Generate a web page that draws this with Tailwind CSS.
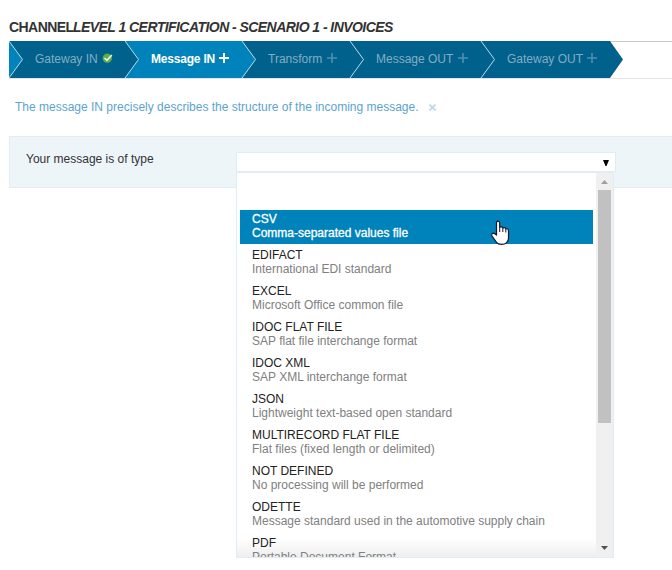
<!DOCTYPE html>
<html lang="en">
<head>
<meta charset="utf-8">
<title>Channel</title>
<script src="https://cdn.jsdelivr.net/npm/@tailwindcss/browser@4"></script>
</head>
<body class="w-[672px] h-[570px] overflow-hidden bg-white text-[12px] leading-[14px] text-[#333] font-['Liberation_Sans',Arial,sans-serif]">
<div class="flex flex-col pl-[9px]">
  <h1 class="mt-[19px] h-[22px] text-[14px] leading-[16px] font-bold whitespace-nowrap"><span class="inline-block w-[64px] tracking-[-0.55px]">CHANNEL</span><i class="tracking-[-0.55px]">LEVEL 1 CERTIFICATION - SCENARIO 1 - INVOICES</i></h1>
  <nav class="relative h-[38px] border-t border-b border-t-[#ccc] border-b-[#e5e5e5]">
    <svg class="absolute -top-px left-0" width="614" height="37" viewBox="0 0 614 37">
      <path d="M0 0H601L614 18.500L601 37H0Z" fill="#00618c"/>
      <path d="M0 0L13.500 18.500L0 37ZM116 0H233L246.500 18.500L233 37H116L129.500 18.500Z" fill="#0082bb"/>
      <path d="M0 0L13.500 18.500L0 37M116 0L129.500 18.500L116 37M233 0L246.500 18.500L233 37M341 0L354.500 18.500L341 37M472 0L485.500 18.500L472 37" fill="none" stroke="#b9dcec"/>
    </svg>
    <div class="relative flex h-[36px] items-center pl-[26px] pb-[2px] text-[#84adc1] whitespace-nowrap">
      <div class="flex w-[116px] items-center"><span class="w-[67px]">Gateway IN</span>
        <svg class="-mt-[2px]" width="12" height="12" viewBox="0 0 12 12"><circle cx="5.300" cy="6.300" r="4.700" fill="#5cae4a"/><path d="M2.500 6L5 8.300L9.800 3" fill="none" stroke="#eef7e8" stroke-width="1.600"/></svg></div>
      <div class="flex w-[117px] items-center font-bold text-white"><span class="w-[68px] tracking-[-0.2px]">Message IN</span>
        <svg class="-mt-[2px]" width="10" height="10" viewBox="0 0 10 10"><path d="M5 0V10M0 5H10" stroke="#fff" stroke-width="2"/></svg></div>
      <div class="flex w-[108px] items-center"><span class="w-[59px]">Transform</span>
        <svg class="-mt-[2px]" width="10" height="10" viewBox="0 0 10 10"><path d="M5 0V10M0 5H10" stroke="#4d90ae" stroke-width="1.600"/></svg></div>
      <div class="flex w-[131px] items-center"><span class="w-[82px]">Message OUT</span>
        <svg class="-mt-[2px]" width="10" height="10" viewBox="0 0 10 10"><path d="M5 0V10M0 5H10" stroke="#4d90ae" stroke-width="1.600"/></svg></div>
      <div class="flex items-center"><span class="w-[80px]">Gateway OUT</span>
        <svg class="-mt-[2px]" width="10" height="10" viewBox="0 0 10 10"><path d="M5 0V10M0 5H10" stroke="#4d90ae" stroke-width="1.600"/></svg></div>
    </div>
  </nav>
  <div class="mt-[21px] ml-[6px] flex h-[14px] items-center text-[#5ba4cf] whitespace-nowrap"><span class="w-[414px]">The message IN precisely describes the structure of the incoming message.</span>
    <svg class="mt-px" width="7" height="7" viewBox="0 0 7 7"><path d="M.5 .5L6.500 6.500M6.500 .5L.5 6.500" stroke="#b8d8ea" stroke-width="1.600"/></svg></div>
  <section class="relative mt-[22px] h-[52px] border border-r-0 border-[#e0edf5] bg-[#edf5f9]">
    <div class="pt-[15px] pl-[16px]">Your message is of type</div>
    <div class="absolute top-[15px] left-[226px]">
      <div class="flex h-[20px] w-[380px] items-center justify-end border border-[#e0edf5] bg-white pr-[6px]"><svg class="mt-px" width="6" height="6" viewBox="0 0 6 6"><path d="M0 0H6L3.500 6H2.500Z" fill="#000"/></svg></div>
      <div class="flex h-[386px] w-[378px] overflow-hidden border border-[#e0edf5] bg-white">
        <ul class="h-[384px] w-[359px] overflow-hidden bg-[linear-gradient(to_top,#eee,#fff_18px)] px-[3px] pt-[37px] whitespace-nowrap text-[#808080]">
          <li class="mb-[2px] h-[34px] bg-[#0082bb] pt-[2px] pl-[12px] text-white [-webkit-text-stroke:0.3px_white]"><div>CSV</div><div>Comma-separated values file</div></li>
          <li class="h-[36px] pt-[2px] pl-[12px]"><div class="text-[#222]">EDIFACT</div><div>International EDI standard</div></li>
          <li class="h-[36px] pt-[2px] pl-[12px]"><div class="text-[#222]">EXCEL</div><div>Microsoft Office common file</div></li>
          <li class="h-[36px] pt-[2px] pl-[12px]"><div class="text-[#222]">IDOC FLAT FILE</div><div>SAP flat file interchange format</div></li>
          <li class="h-[36px] pt-[2px] pl-[12px]"><div class="text-[#222]">IDOC XML</div><div>SAP XML interchange format</div></li>
          <li class="h-[36px] pt-[2px] pl-[12px]"><div class="text-[#222]">JSON</div><div>Lightweight text-based open standard</div></li>
          <li class="h-[36px] pt-[2px] pl-[12px]"><div class="text-[#222]">MULTIRECORD FLAT FILE</div><div>Flat files (fixed length or delimited)</div></li>
          <li class="h-[36px] pt-[2px] pl-[12px]"><div class="text-[#222]">NOT DEFINED</div><div>No processing will be performed</div></li>
          <li class="h-[36px] pt-[2px] pl-[12px]"><div class="text-[#222]">ODETTE</div><div>Message standard used in the automotive supply chain</div></li>
          <li class="h-[36px] pt-[2px] pl-[12px]"><div class="text-[#222]">PDF</div><div>Portable Document Format</div></li>
        </ul>
        <div class="flex h-[384px] w-[17px] flex-col items-center bg-[#f0f0f0]">
          <svg class="mt-[7px] shrink-0" width="7" height="4" viewBox="0 0 7 4"><path d="M0 4L3.500 0L7 4Z" fill="#a0a0a0"/></svg>
          <div class="mt-[6px] h-[233px] w-[13px] bg-[#c1c1c1]"></div>
          <svg class="mt-auto mb-[7px] shrink-0" width="7" height="4" viewBox="0 0 7 4"><path d="M0 0L3.500 4L7 0Z" fill="#505050"/></svg>
        </div>
      </div>
    </div>
  </section>
</div>
<svg class="absolute top-[220px] left-[490px]" width="20" height="26" viewBox="0 0 20 26"><path d="M6.500 15V3Q6.500 1.200 8 1.200Q9.700 1.200 9.700 3V7.500Q10.300 6.700 11.500 6.900Q12.800 7.100 13 8Q15.300 7.200 16 8.800Q18.500 8.400 18.500 11V18Q18.500 21 16.500 22.800Q15 24.300 11.500 24.300Q8 24.300 6.500 22.300L1.700 15.500Q1.400 13.500 3 13.200Q4.800 13.300 6.500 15Z" fill="#fff" stroke="#141a2e" stroke-width="1.200" stroke-linejoin="round"/><path d="M9.700 7.500V12M12.800 8V12M15.800 9V12.500" stroke="#141a2e"/></svg>
</body>
</html>
